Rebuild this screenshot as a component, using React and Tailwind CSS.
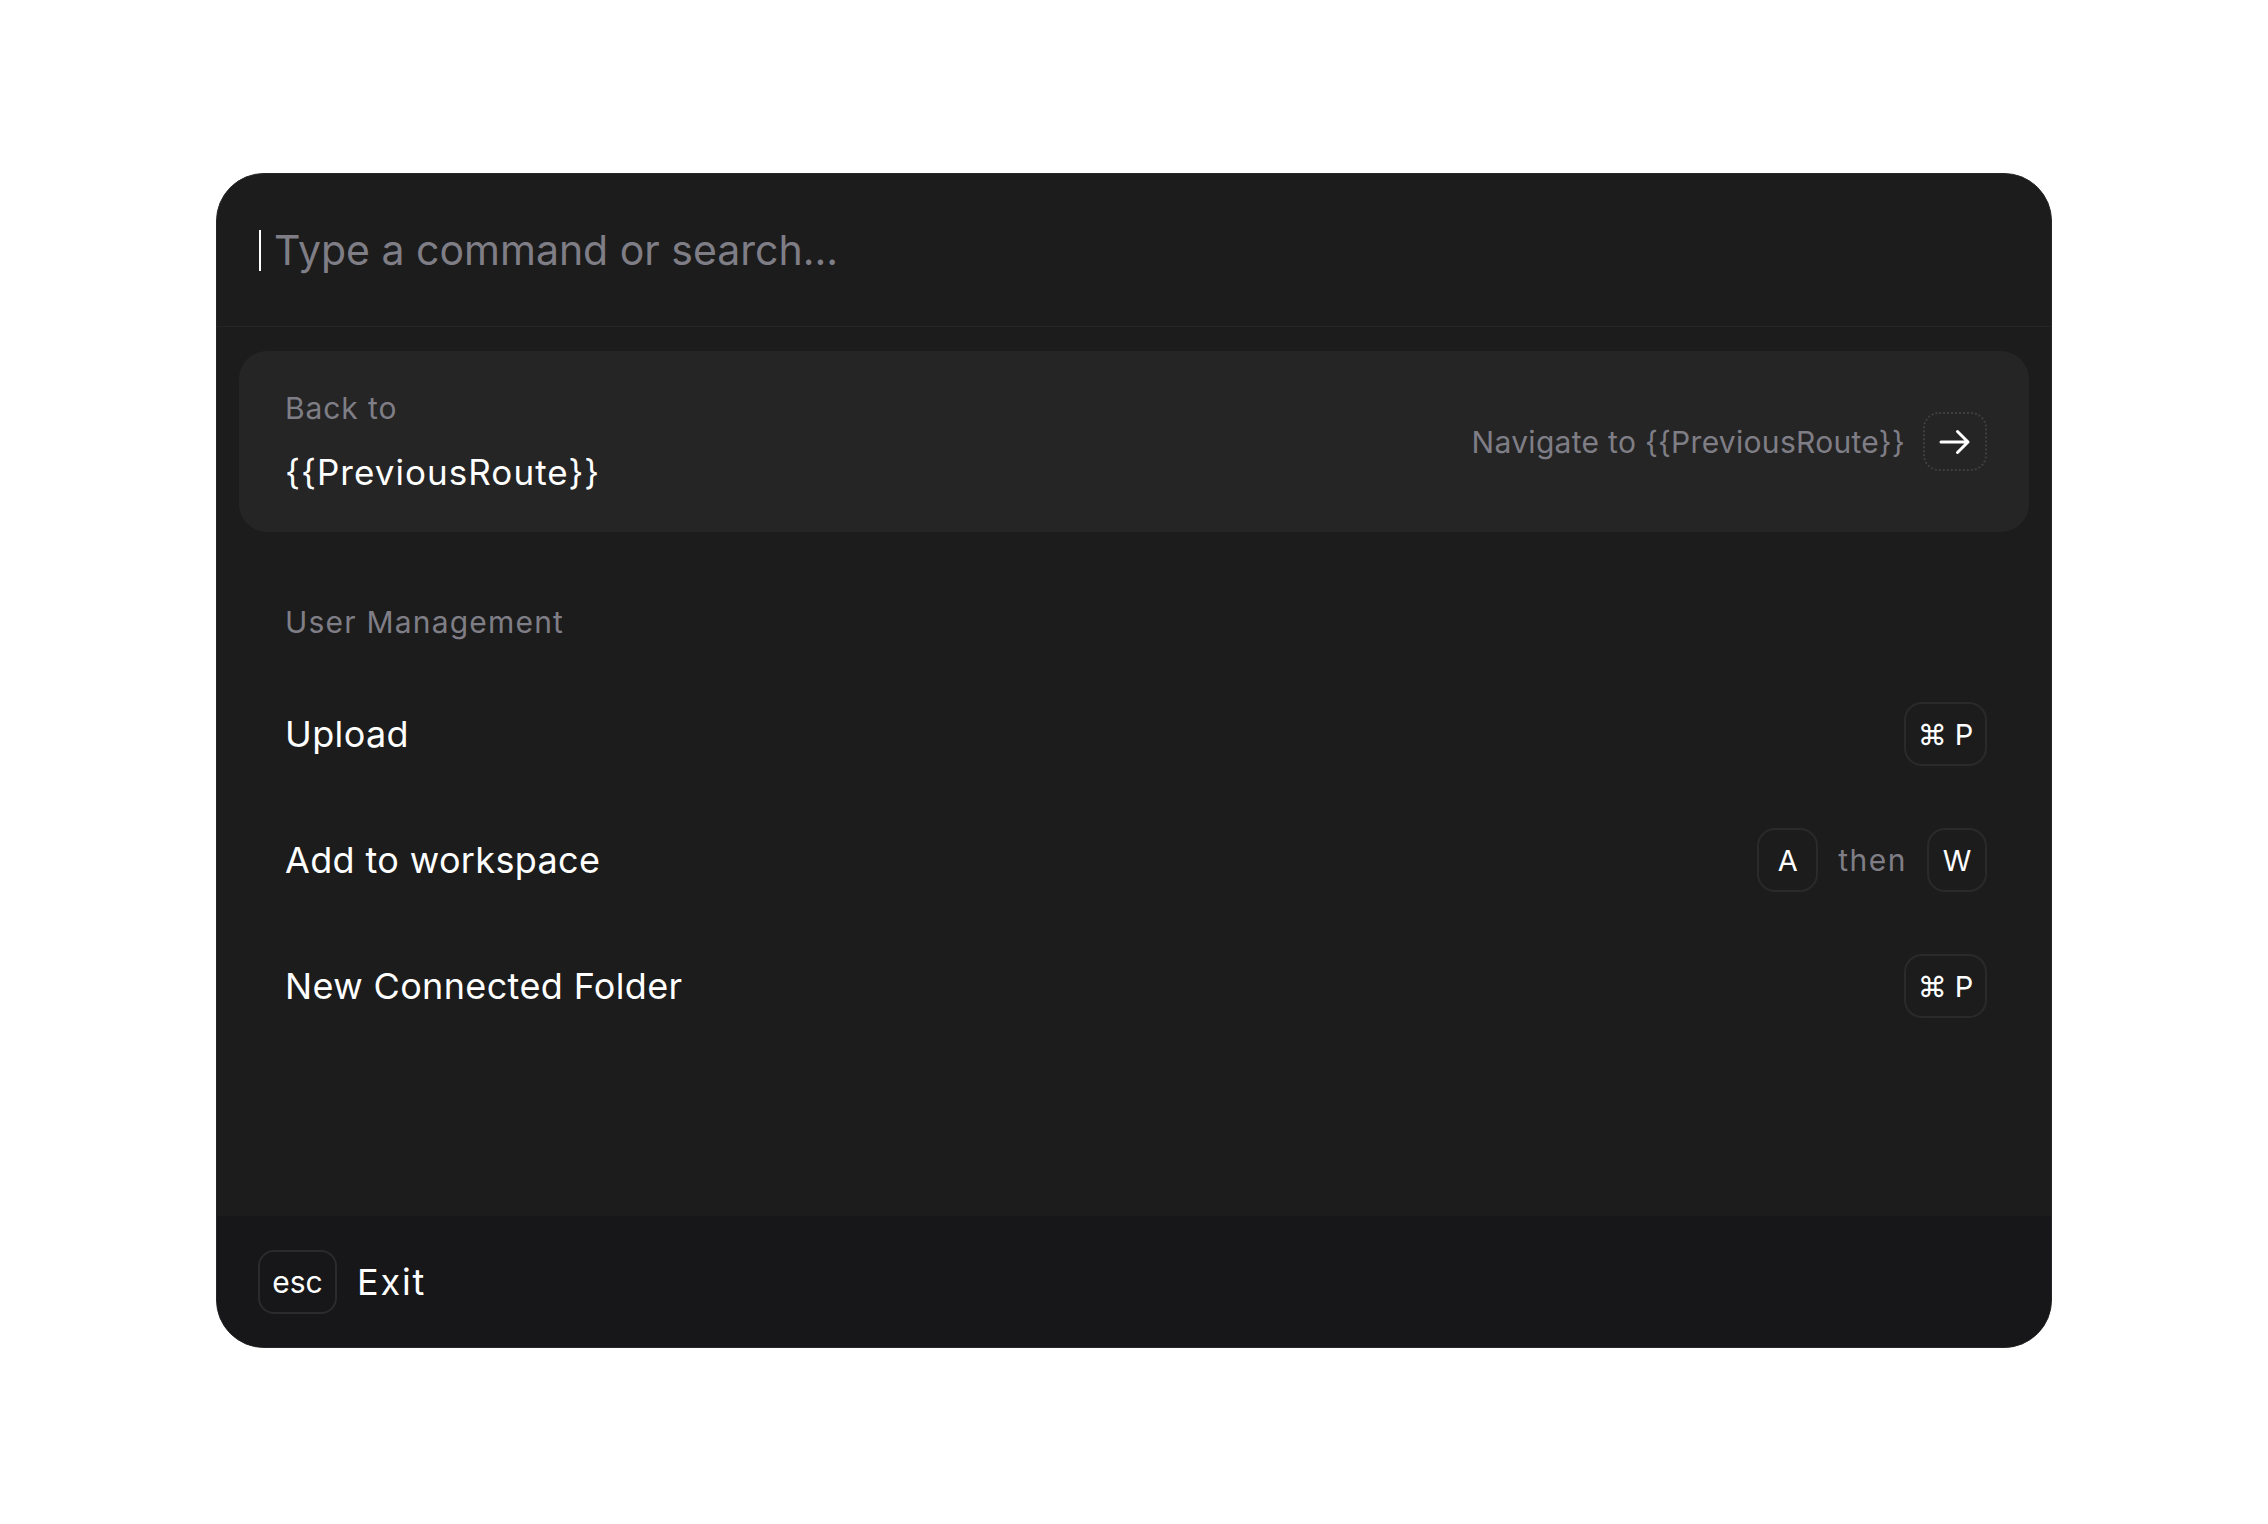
function Kbd({ children, className = "" }) {
  return (
    <span
      className={`flex h-[64px] items-center justify-center rounded-[18px] border-2 border-[#2a2a2b] text-[29px] leading-none text-white ${className}`}
    >
      {children}
    </span>
  );
}

function ArrowRight() {
  return (
    <svg width="32" height="26" viewBox="0 0 32 26" fill="none">
      <path
        d="M2 13H29M18.5 2.5L29 13L18.5 23.5"
        stroke="white"
        strokeWidth="3"
        strokeLinecap="round"
        strokeLinejoin="round"
      />
    </svg>
  );
}

const items = [
  { label: "Upload", keys: "cmd" },
  { label: "Add to workspace", keys: "seq" },
  { label: "New Connected Folder", keys: "cmd" },
];

export default function App() {
  return (
    <div
      className="min-h-screen bg-white flex justify-center pt-[173px]"
      style={{ fontFamily: "Inter, 'Noto Sans', sans-serif" }}
    >
      <div className="w-[1836px] h-[1175px] rounded-[48px] border border-[#262627] bg-[#1c1c1c] overflow-hidden flex flex-col">
        {/* Search input */}
        <div className="h-[153px] shrink-0 border-b border-[#252525] flex items-center pl-[42px]">
          <span className="w-[2px] h-[41px] bg-white" />
          <span className="ml-[13px] text-[41px] leading-none text-[#7f7e86]">
            Type a command or search...
          </span>
        </div>

        {/* Results */}
        <div className="flex-1 px-[22px] pt-[24px] flex flex-col">
          <div className="h-[181px] shrink-0 rounded-[28px] bg-[#252525] flex items-center justify-between pl-[46px] pr-[42px]">
            <div className="flex flex-col gap-[32px]">
              <span className="text-[30px] leading-none tracking-[0.03em] text-[#7f7e86]">
                Back to
              </span>
              <span className="text-[35px] leading-none tracking-[0.03em] text-white">
                {"{{PreviousRoute}}"}
              </span>
            </div>
            <div className="flex items-center gap-[18px]">
              <span className="text-[30px] leading-none tracking-[0.01em] text-[#7f7e86]">
                {"Navigate to {{PreviousRoute}}"}
              </span>
              <span className="w-[64px] h-[59px] rounded-[16px] border-2 border-dotted border-[#3f3f41] flex items-center justify-center">
                <ArrowRight />
              </span>
            </div>
          </div>

          <div className="mt-[75px] pl-[46px] text-[30px] leading-none tracking-[0.04em] text-[#7f7e86]">
            User Management
          </div>

          <div className="mt-[34px] flex flex-col">
            {items.map((item) => (
              <div
                key={item.label}
                className="h-[126px] flex items-center justify-between pl-[46px] pr-[42px]"
              >
                <span className="text-[36px] leading-none tracking-[0.01em] text-white">
                  {item.label}
                </span>
                {item.keys === "cmd" ? (
                  <Kbd className="w-[83px] gap-[8px]">
                    <span>⌘</span>
                    <span>P</span>
                  </Kbd>
                ) : (
                  <div className="flex items-center gap-[20px]">
                    <Kbd className="w-[61px]">A</Kbd>
                    <span className="text-[30px] leading-none tracking-[0.05em] text-[#7f7e86]">
                      then
                    </span>
                    <Kbd className="w-[60px]">W</Kbd>
                  </div>
                )}
              </div>
            ))}
          </div>
        </div>

        {/* Footer */}
        <div className="h-[131px] shrink-0 bg-[#171719] flex items-center pl-[41px] gap-[20px]">
          <span className="w-[79px] h-[64px] rounded-[16px] border-2 border-[#2b2b2c] flex items-center justify-center text-[30px] leading-none text-white">
            esc
          </span>
          <span className="text-[36px] leading-none tracking-[0.05em] text-white">Exit</span>
        </div>
      </div>
    </div>
  );
}
